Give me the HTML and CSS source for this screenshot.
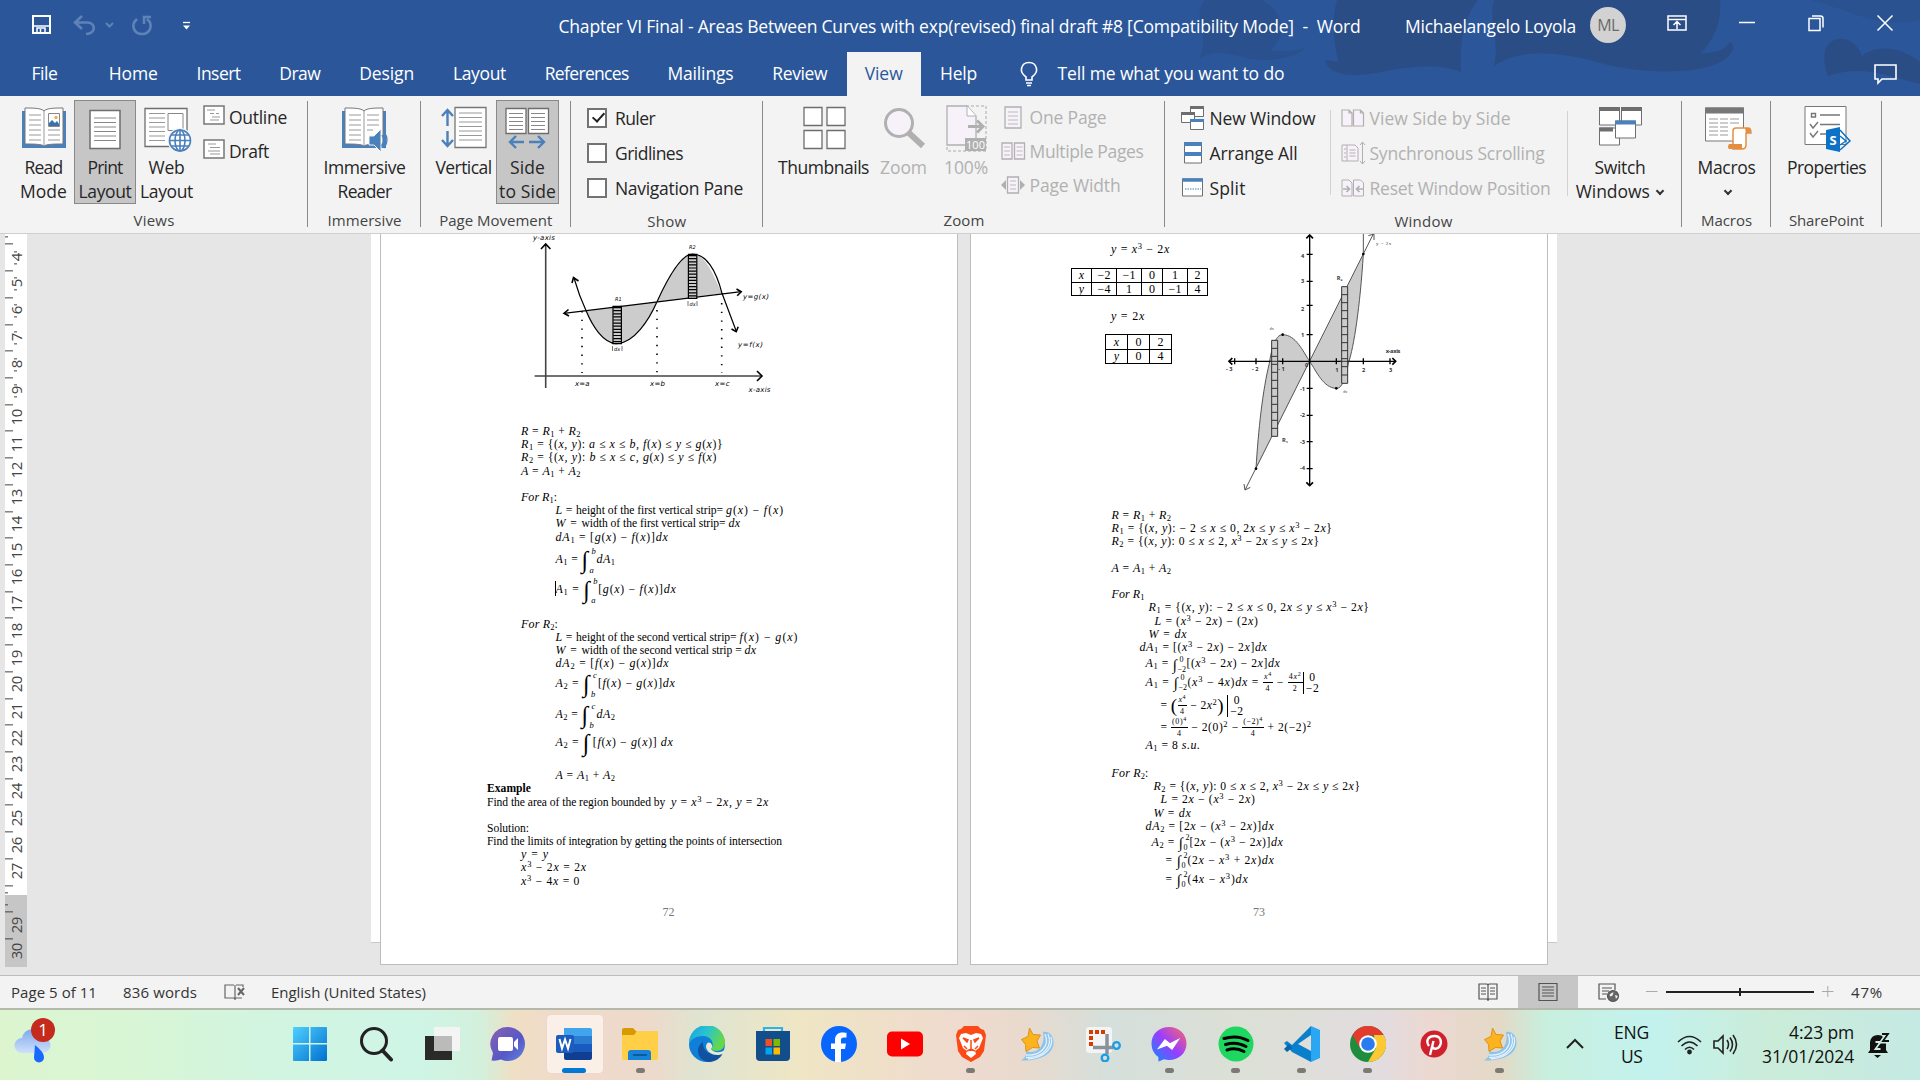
FILE: index.html
```html
<!DOCTYPE html>
<html lang="en">
<head>
<meta charset="utf-8">
<title>Chapter VI Final - Word</title>
<link rel="stylesheet" href="styles.css">
</head>
<body>
<div class="app">
<header class="titlebar">
  <svg class="clouds" width="760" height="96" viewBox="1160 0 760 96" fill="#2a4d85">
    <path d="M1205 0C1190 18 1212 30 1199 60C1212 48 1232 54 1250 59C1278 63 1300 55 1305 48C1290 52 1276 52 1270 50C1288 36 1284 12 1262 0z" opacity=".6"/>
    <path d="M1337 0C1330 25 1336 48 1338 62L1325 60C1330 80 1365 76 1390 70C1420 66 1440 64 1461 72C1460 45 1462 20 1478 0z"/>
    <path d="M1494 0C1488 22 1500 40 1494 66C1520 48 1555 52 1590 60C1640 76 1700 74 1720 62C1734 54 1736 46 1730 42C1722 54 1708 52 1700 54C1716 38 1722 18 1720 0z"/>
    <path d="M1828 76C1822 60 1822 42 1838 39C1852 37 1860 50 1862 56C1880 42 1906 50 1920 62V84C1890 76 1860 64 1828 76z"/>
    <path d="M1810 0C1850 10 1880 30 1920 20V0z" opacity=".45"/>
  </svg>
  <div class="caption">
    <div class="quick">
      <svg width="200" height="30" viewBox="0 10 200 30" fill="none" stroke="#fff">
        <path d="M33 16h17v17h-17z" stroke-width="2"/><path d="M33 26h17M37 34v-6h8v6M40.500 29v5" stroke-width="1.500"/>
        <g stroke="#5f82b8" stroke-width="2.600"><path d="M82 16l-7 6.500 7 6.500M76 22.500h12c8 1 8 11 -2 11.500"/><path d="M106 23l3.500 3.500 3.500-3.500" stroke-width="2"/><path d="M137 19c-7 6-3 15 5 15s12-9 5-15M144 24v-7h7"/></g>
        <path d="M183 22.500h7" stroke-width="1.300"/><path d="M183 25.500h7l-3.500 4z" fill="#fff" stroke="none"/>
      </svg>
    </div>
    <span class="doc-name" data-w="802">Chapter VI Final - Areas Between Curves with exp(revised) final draft #8 [Compatibility Mode]&nbsp; -&nbsp; Word</span>
    <span class="user" data-w="171">Michaelangelo Loyola</span>
    <span class="avatar">ML</span>
    <svg class="winbtns" width="260" height="32" viewBox="1650 8 260 32" fill="none" stroke="#fff" stroke-width="1.500">
      <path d="M1668 16h18v14h-18zM1668 19.500h18M1677 29v-7M1673.500 25l3.500-3.500 3.500 3.500"/>
      <path d="M1739 22.500h16"/><path d="M1809 18.500h11v12h-11zM1812 16h8.500q2.500 0 2.500 2.500v9"/>
      <path d="M1877.500 15.500l15 15M1892.500 15.500l-15 15"/>
    </svg>
  </div>
  <nav class="tabs">
    <a class="file"><span data-w="26">File</span></a><a><span data-w="49">Home</span></a><a><span data-w="44">Insert</span></a><a><span data-w="41">Draw</span></a><a><span data-w="55">Design</span></a><a><span data-w="53">Layout</span></a><a><span data-w="84">References</span></a><a><span data-w="66">Mailings</span></a><a><span data-w="55">Review</span></a><a class="on"><span data-w="38">View</span></a><a><span data-w="37">Help</span></a>
    <svg class="bulb" width="22" height="28" viewBox="0 0 22 28" fill="none" stroke="#fff" stroke-width="1.600"><path d="M8 20v-3C4 14 3 11 3.500 8.500c1.500-8 13.500-8 15 0C19 11 18 14 14 17v3zM8 23h6M9 25.500h4"/></svg>
    <span class="tell" data-w="227">Tell me what you want to do</span>
    <svg class="comment" width="24" height="24" viewBox="0 0 24 24" fill="none" stroke="#fff" stroke-width="1.600"><path d="M1 3h21v14H8l-4 4v-4H1z"/></svg>
  </nav>
</header>

<section class="ribbon">
  <div class="group views">
    <div class="tools">
      <div class="btn w61">
        <svg viewBox="0 0 48 46"><path d="M2 5h44v37H2z" fill="#4a80bb"/><path d="M5 2c8 0 16 0 19 3 3-3 11-3 19-3v36c-8 0-16 0-19 2-3-2-11-2-19-2z" fill="#fff" stroke="#777"/><path d="M24 5v35M9 9h12M9 14h12M9 19h12M9 24h12M9 29h12M9 34h12M28 24h12M28 29h12M28 34h12" stroke="#999"/><path d="M28.500 7.500h11v13h-11z" fill="#fff" stroke="#888"/><path d="M29 20v-3l3-3 3 3 2-2 2 3v2z" fill="#3a72ad"/><circle cx="36" cy="11.500" r="1.700" fill="#e8b060"/></svg>
        <span data-w="38">Read</span><span data-w="47">Mode</span></div>
      <div class="btn w62 on">
        <svg viewBox="0 0 48 46"><path d="M9 4.500h30v38H9z" fill="#fff" stroke="#6e6e6e" stroke-width="1.500"/><path d="M13 12h22M13 16.500h22M13 21h22M13 25.500h22M13 30h22M13 34.500h22" stroke="#888"/></svg>
        <span data-w="35">Print</span><span data-w="53">Layout</span></div>
      <div class="btn w61">
        <svg viewBox="0 0 48 46"><path d="M2 2.500h42v38H2z" fill="#fff" stroke="#6e6e6e" stroke-width="1.300"/><path d="M6 7.500h16M6 12h16M6 16.500h16M6 21h16M6 25.500h16M6 30h16M6 34.500h16" stroke="#999"/><path d="M25 7.500h15v17H25z" fill="#fff" stroke="#888"/><circle cx="37" cy="34.500" r="12.500" fill="#f3f3f3"/><g fill="#fff" stroke="#4a80bb" stroke-width="1.600"><circle cx="37" cy="34.500" r="10.500"/><ellipse cx="37" cy="34.500" rx="5" ry="10.500"/><path d="M37 24v21M27 34.500h20M29 29h16M29 40h16"/></g></svg>
        <span data-w="36">Web</span><span data-w="53">Layout</span></div>
      <div class="list">
        <div class="item"><svg viewBox="0 0 24 24"><path d="M2 3h20v18H2z" fill="#fff" stroke="#777" stroke-width="1.500"/><path d="M5 7h8M8 10.500h4M14 10.500h3M10 14h8M8 17h9" stroke="#999"/></svg><span data-w="58">Outline</span></div>
        <div class="item"><svg viewBox="0 0 24 24"><path d="M2 3h20v18H2z" fill="#fff" stroke="#777" stroke-width="1.500"/><path d="M6 7h8M8 10.500h10M6 14h12M8 17h10" stroke="#999"/></svg><span data-w="40">Draft</span></div>
      </div>
    </div>
    <div class="name"><span data-w="41">Views</span></div>
  </div>
  <div class="group immersive">
    <div class="tools center"><div class="btn">
      <svg viewBox="0 0 48 46"><path d="M1 5h44v37H1z" fill="#4a80bb"/><path d="M4 2c8 0 16 0 19 3 3-3 11-3 19-3v36c-8 0-16 0-19 2-3-2-11-2-19-2z" fill="#fff" stroke="#777"/><path d="M23 5v35M8 9h12M8 14h12M8 19h12M8 24h12M8 29h12M8 34h12M26 9h12M26 14h12M26 19h12M26 24h6" stroke="#999"/><path d="M28 30h5l7-7v23l-7-7h-5z" fill="#4a80bb" stroke="#f3f3f3"/><path d="M41 29q3 5 0 11M43 26q6 8 0 16" fill="none" stroke="#4a80bb" stroke-width="1.300"/></svg>
      <span data-w="82">Immersive</span><span data-w="54">Reader</span></div></div>
    <div class="name"><span data-w="74">Immersive</span></div>
  </div>
  <div class="group movement">
    <div class="tools">
      <div class="btn w65"><svg viewBox="0 0 48 46"><path d="M15 1.500h31v40H15z" fill="#fff" stroke="#777" stroke-width="1.300"/><path d="M19 7h23M19 11.500h23M19 16h23M19 20.500h23M19 25h23M19 29.500h23M19 34h23" stroke="#999"/><path d="M7.500 5v15M2 10l5.500-6 5.500 6M7.500 25v14M2 34l5.500 6 5.500-6" fill="none" stroke="#4a80bb" stroke-width="2.400"/></svg><span data-w="56">Vertical</span></div>
      <div class="btn w63 on"><svg viewBox="0 0 48 46"><path d="M2 2.500h20v25H2zM24.500 2.500h20v25h-20z" fill="#fff" stroke="#6e6e6e" stroke-width="1.300"/><path d="M5 7.500h14M5 11.500h14M5 15.500h14M5 19.500h14M5 23.500h14M27 7.500h14M27 11.500h14M27 15.500h14M27 19.500h14M27 23.500h14" stroke="#888"/><path d="M20 36H7M12 30l-6 6 6 6M25 36h15M34 30l6 6-6 6" fill="none" stroke="#4a80bb" stroke-width="2.400"/></svg><span data-w="35">Side</span><span data-w="57">to Side</span></div>
    </div>
    <div class="name"><span data-w="113">Page Movement</span></div>
  </div>
  <div class="group show">
    <div class="tools"><div class="list wide">
      <div class="item"><i class="box on"></i><span data-w="40">Ruler</span></div>
      <div class="item"><i class="box"></i><span data-w="68">Gridlines</span></div>
      <div class="item"><i class="box"></i><span data-w="128">Navigation Pane</span></div>
    </div></div>
    <div class="name"><span data-w="39">Show</span></div>
  </div>
  <div class="group zoom">
    <div class="tools">
      <div class="btn w93"><svg viewBox="0 0 48 46" fill="#fff" stroke="#6e6e6e" stroke-width="1.300"><path d="M4 1.500h18v18H4zM27 1.500h18v18H27zM4 24.500h18v18H4zM27 24.500h18v18H27z"/></svg><span data-w="91">Thumbnails</span></div>
      <div class="btn w67 off"><svg viewBox="0 0 48 46"><path d="M29 27l14 13" stroke="#b0b0b0" stroke-width="6"/><circle cx="19" cy="17" r="13.500" fill="#f7f2f9" stroke="#b0b0b0" stroke-width="3"/></svg><span data-w="47">Zoom</span></div>
      <div class="btn w58 off"><svg viewBox="0 0 48 46"><path d="M24 0h20v45H5v-6" fill="none" stroke="#aaa" stroke-dasharray="3 2"/><path d="M5 0h20l9 10v29H5z" fill="#f7f2f9" stroke="#b0b0b0" stroke-width="1.300"/><path d="M25 0v10h9" fill="#fff" stroke="#b0b0b0"/><path d="M26 20.500h14M35 14.500l6 6-6 6" stroke="#b0b0b0" stroke-width="3" fill="none"/><path d="M23 32h21v13H23z" fill="#b0b0b0"/><text x="33.500" y="42.500" class="hundred">100</text></svg><span data-w="44">100%</span></div>
      <div class="list off">
        <div class="item"><svg viewBox="0 0 24 24"><path d="M4 2h16v21H4z" fill="#f7f2f9" stroke="#b0b0b0" stroke-width="1.300"/><path d="M7 7h10M7 11h10M7 15h10M7 19h10" stroke="#bbb"/></svg><span data-w="77">One Page</span></div>
        <div class="item"><svg viewBox="0 0 24 24"><path d="M1 4h10v16H1zM13.500 4h10v16h-10z" fill="#f7f2f9" stroke="#b0b0b0" stroke-width="1.300"/><path d="M3 8h6M3 12h6M3 16h6M15.500 8h6M15.500 12h6M15.500 16h6" stroke="#bbb"/></svg><span data-w="114">Multiple Pages</span></div>
        <div class="item"><svg viewBox="0 0 24 24"><path d="M6.500 4h11v16h-11z" fill="#f7f2f9" stroke="#b0b0b0" stroke-width="1.300"/><path d="M9 8h6M9 12h6M9 16h6" stroke="#bbb"/><path d="M5 7v10l-5-5zM19 7v10l5-5z" fill="#b0b0b0"/></svg><span data-w="91">Page Width</span></div>
      </div>
    </div>
    <div class="name"><span data-w="41">Zoom</span></div>
  </div>
  <div class="group window">
    <div class="tools">
      <div class="list wide first">
        <div class="item"><svg viewBox="0 0 24 24" fill="#fff" stroke="#6e6e6e"><path d="M9.500 0.500h13v10h-13z"/><path d="M9 1.500h14" stroke-width="3"/><path d="M.5 6.500h13v10H.500z"/><path d="M0 7.500h14" stroke-width="3"/><path d="M9.500 13.500h13v10h-13z"/><path d="M9 14.500h14" stroke="#4a80bb" stroke-width="3"/></svg><span data-w="106">New Window</span></div>
        <div class="item"><svg viewBox="0 0 24 24" fill="#fff" stroke="#6e6e6e"><path d="M3.500 2h17v20h-17z"/><path d="M3 3h18M3 13h18" stroke="#4a80bb" stroke-width="4"/></svg><span data-w="88">Arrange All</span></div>
        <div class="item"><svg viewBox="0 0 24 24" fill="#fff" stroke="#6e6e6e"><path d="M1.500 3h20v17h-20z"/><path d="M1 4h21" stroke="#4a80bb" stroke-width="3.500"/><path d="M4 13h16" stroke="#4a80bb" stroke-dasharray="1.500 1"/></svg><span data-w="36">Split</span></div>
      </div>
      <div class="list wide off second">
        <div class="item"><svg viewBox="0 0 24 24" fill="#f7f2f9" stroke="#b0b0b0"><path d="M1 4h7l3 3v13H1zM12.500 4h7l3 3v13h-10zM8 4v3h3M19.500 4v3h3" stroke-width="1.200"/></svg><span data-w="141">View Side by Side</span></div>
        <div class="item"><svg viewBox="0 0 24 24" fill="#f7f2f9" stroke="#b0b0b0"><path d="M6 4H1v16h5M6 4h8l3 3v13H6zM3 8h2M3 12h2M3 16h2M8.500 9h6M8.500 12h6M8.500 15h6M21.500 1v22M19 4l2.500-3L24 4M19 20l2.500 3 2.500-3"/></svg><span data-w="175">Synchronous Scrolling</span></div>
        <div class="item"><svg viewBox="0 0 24 24" fill="#f7f2f9" stroke="#b0b0b0"><path d="M1 4h7l3 3v13H1zM12.500 4h7l3 3v13h-10z"/><path d="M2 13h6M22 13h-6M5.500 10l3 3-3 3M18.500 10l-3 3 3 3" stroke-width="1.700"/></svg><span data-w="181">Reset Window Position</span></div>
      </div>
      <div class="btn switch"><svg viewBox="0 0 48 46" fill="#fff" stroke="#6e6e6e"><path d="M3.500 2h20v17h-20zM25.500 2h20v17h-20zM3.500 22h20v17h-20z"/><path d="M3 3h21M25 3h21M3 23.500h14" stroke-width="4"/><path d="M19.500 15h20v17h-20z"/><path d="M19 16.500h21" stroke="#4a80bb" stroke-width="4"/></svg><span data-w="51">Switch</span><span><span data-w="74">Windows</span> <i class="chev"></i></span></div>
    </div>
    <div class="name"><span data-w="58">Window</span></div>
  </div>
  <div class="group macros">
    <div class="tools center"><div class="btn"><svg viewBox="0 0 48 46"><path d="M2.500 2h38v33h-38z" fill="#fff" stroke="#777"/><path d="M2 4.500h39" stroke="#777" stroke-width="6"/><path d="M6 13h9M17 13h8M27 13h9M6 17h9M17 17h8M27 17h9M6 21h9M17 21h8M6 25h9M17 25h8M6 29h9M17 29h8" stroke="#999"/><path d="M30 25q0-3 3-3h12q3 0 3 5h-5v12q0 4-4 4h-9z" fill="#fff" stroke="#e58e3f" stroke-width="1.500"/><path d="M26 38h13v5H26q-2-2 0-5zM42 22h5v5h-4z" fill="#e58e3f"/></svg><span data-w="58">Macros</span><span><i class="chev"></i></span></div></div>
    <div class="name"><span data-w="51">Macros</span></div>
  </div>
  <div class="group share">
    <div class="tools center"><div class="btn"><svg viewBox="0 0 48 46"><path d="M2 .5h41v38H2z" fill="#fff" stroke="#777"/><path d="M8.500 7.500h4v3.500h-4zM17 9h20M17 18.500h20M17 28h8M7 18l3 4 5-6M7 27l3 4 5-6" fill="none" stroke="#777" stroke-width="1.400"/><path d="M37 24l10 11-10 9M37 30l6 5-6 4" fill="none" stroke="#0d72c5" stroke-width="1.500"/><path d="M23 24l14-3v25l-14-3z" fill="#0d72c5"/><text x="30" y="39" class="sp">S</text></svg><span data-w="79">Properties</span></div></div>
    <div class="name"><span data-w="75">SharePoint</span></div>
  </div>
</section>

<main class="desk">
  <div class="ruler"><div class="ticks" id="ticks"></div></div>
  <div class="spread">
  <article class="page left">
    <svg class="plot" width="270" height="166" viewBox="520 234 270 166">
      <path d="M586.200 311C592 325 603 343.500 616.800 343.700C634 343 649 320 657 301.700C666 282 680 254 692.600 254C706 254 714 277 722 293.300z" fill="#ccc"/>
      <path d="M574 278C578 292 582 302 586.200 311C592 325 603 343.500 616.800 343.700C634 343 649 320 657 301.700C666 282 680 254 692.600 254C706 254 716 270 722 293.300L736.200 331M564 313.300L741.200 291.700" fill="none" stroke="#000" stroke-width="1.200"/>
      <path d="M545.700 388V245M534.600 376H762" fill="none" stroke="#444" stroke-width="1.600"/>
      <path d="M541 249l4.700-5 4.700 5M757 371l5 5-5 5M572 283l1.500-5.500 5 3.500M568.500 309.500l-4.500 3.800 5 2.700M736.500 289l4.700 2.700-4 4M731.500 329l4.700 2.700 2-5" fill="none" stroke="#000" stroke-width="1.600"/>
      <path d="M582 311v62M657 310v63M721.700 303v70" stroke="#000" stroke-width="1.600" stroke-dasharray="1.400 7.300"/>
      <path d="M617.200 306.500v37M692.600 254.500v44" stroke="#ccc" stroke-width="8"/><path d="M617.200 307v37M692.600 255v44" stroke="#000" stroke-width="8" stroke-dasharray="1.200 1.900"/><path d="M613 306.300h8.400v37.400H613zM688.400 254.300h8.400v44h-8.400z" fill="none" stroke="#000" stroke-width="1.200"/>
      <path d="M612.500 346v5M622 346v5M688 301v5M697 301v5" stroke="#555" stroke-width=".8"/>
      <g class="lbl"><text x="533" y="239.500" textLength="22">y-axis</text><text x="748.500" y="391.500" textLength="22">x-axis</text><text x="743" y="299" textLength="26">y=g(x)</text><text x="738" y="347" textLength="25">y=f(x)</text><text x="575" y="386" textLength="14.500">x=a</text><text x="650" y="386" textLength="15">x=b</text><text x="715" y="386" textLength="14.500">x=c</text></g>
      <g class="lbl tiny"><text x="615" y="301">R1</text><text x="689" y="248.500">R2</text><text x="614" y="350.500">dx</text><text x="689.500" y="305.500">dx</text></g>
    </svg>
    <div class="text">
      <p class="i1"><span data-w="60"><i>R</i> = <i>R</i><sub>1</sub> + <i>R</i><sub>2</sub></span></p>
      <p class="i1"><span data-w="202"><i>R</i><sub>1</sub> = {(<i>x, y</i>): <i>a</i> ≤ <i>x</i> ≤ <i>b, f</i>(<i>x</i>) ≤ <i>y</i> ≤ <i>g</i>(<i>x</i>)}</span></p>
      <p class="i1"><span data-w="196"><i>R</i><sub>2</sub> = {(<i>x, y</i>): <i>b</i> ≤ <i>x</i> ≤ <i>c, g</i>(<i>x</i>) ≤ <i>y</i> ≤ <i>f</i>(<i>x</i>)</span></p>
      <p class="i1"><span data-w="60"><i>A</i> = <i>A</i><sub>1</sub> + <i>A</i><sub>2</sub></span></p>
      <p></p>
      <p class="i1"><span data-w="36"><i>For R</i><sub>1</sub>:</span></p>
      <p class="i2"><span data-w="20.5"><i>L</i> = </span><span data-w="150">height of the first vertical strip= </span><span data-w="58"><i>g</i>(<i>x</i>) − <i>f</i>(<i>x</i>)</span></p>
      <p class="i2"><span data-w="26"><i>W</i> = </span><span data-w="147">width of the first vertical strip= </span><span data-w="12"><i>dx</i></span></p>
      <p class="i2"><span data-w="113"><i>dA</i><sub>1</sub> = [<i>g</i>(<i>x</i>) − <i>f</i>(<i>x</i>)]<i>dx</i></span></p>
      <p class="i2 h33"><span data-w="60"><i>A</i><sub>1</sub> = <span class="int"><b>∫</b><em>b</em><em>a</em></span><i>dA</i><sub>1</sub></span></p>
      <p class="i2 h28 caret"><span data-w="121"><i>A</i><sub>1</sub> = <span class="int"><b>∫</b><em>b</em><em>a</em></span>[<i>g</i>(<i>x</i>) − <i>f</i>(<i>x</i>)]<i>dx</i></span></p>
      <p></p>
      <p class="i1"><span data-w="37"><i>For R</i><sub>2</sub>:</span></p>
      <p class="i2"><span data-w="20.5"><i>L</i> = </span><span data-w="163.5">height of the second vertical strip= </span><span data-w="59"><i>f</i>(<i>x</i>) − <i>g</i>(<i>x</i>)</span></p>
      <p class="i2"><span data-w="26"><i>W</i> = </span><span data-w="163">width of the second vertical strip = </span><span data-w="12"><i>dx</i></span></p>
      <p class="i2"><span data-w="114"><i>dA</i><sub>2</sub> = [<i>f</i>(<i>x</i>) − <i>g</i>(<i>x</i>)]<i>dx</i></span></p>
      <p class="i2 h28"><span data-w="120"><i>A</i><sub>2</sub> = <span class="int"><b>∫</b><em>c</em><em>b</em></span>[<i>f</i>(<i>x</i>) − <i>g</i>(<i>x</i>)]<i>dx</i></span></p>
      <p class="i2 h33"><span data-w="60"><i>A</i><sub>2</sub> = <span class="int"><b>∫</b><em>c</em><em>b</em></span><i>dA</i><sub>2</sub></span></p>
      <p class="i2 h23"><span data-w="118"><i>A</i><sub>2</sub> = <span class="int bare"><b>∫</b></span>[<i>f</i>(<i>x</i>) − <i>g</i>(<i>x</i>)] <i>dx</i></span></p>
      <p class="h15"></p>
      <p class="i2"><span data-w="60"><i>A</i> = <i>A</i><sub>1</sub> + <i>A</i><sub>2</sub></span></p>
      <p><strong data-w="44">Example</strong></p>
      <p><span data-w="184">Find the area of the region bounded by  </span><span data-w="98"><i>y</i> = <i>x</i><sup>3</sup> − 2<i>x, y</i> = 2<i>x</i></span></p>
      <p></p>
      <p><span data-w="42">Solution:</span></p>
      <p><span data-w="295">Find the limits of integration by getting the points of intersection</span></p>
      <p class="i1"><span data-w="28"><i>y</i> = <i>y</i></span></p>
      <p class="i1"><span data-w="66"><i>x</i><sup>3</sup> − 2<i>x</i> = 2<i>x</i></span></p>
      <p class="i1"><span data-w="59"><i>x</i><sup>3</sup> − 4<i>x</i> = 0</span></p>
    </div>
    <div class="folio">72</div>
  </article>
  <article class="page right">
    <div class="upper">
      <div class="tables">
        <p class="i3"><span data-w="59"><i>y</i> = <i>x</i><sup>3</sup> − 2<i>x</i></span></p>
        <table class="t1"><tr><td><i>x</i></td><td class="m">−2</td><td class="m">−1</td><td class="z">0</td><td class="m">1</td><td>2</td></tr><tr><td><i>y</i></td><td>−4</td><td>1</td><td>0</td><td>−1</td><td>4</td></tr></table>
        <p class="i3"><span data-w="34"><i>y</i> = 2<i>x</i></span></p>
        <table class="t2"><tr><td><i>x</i></td><td>0</td><td>2</td></tr><tr><td><i>y</i></td><td>0</td><td>4</td></tr></table>
      </div>
      <svg class="plot2" width="187" height="262" viewBox="540 12 561 786">
        <path d="M809 394L970 72C960 230 942 350 925 400C915 450 905 476 889 475C850 474 830 425 809 394C788 363 768 315 728 314C705 314 694 360 688 400C668 480 655 600 648 716z" fill="#ccc"/>
        <g fill="none" stroke="#555" stroke-width="3"><path d="M615 780L1000 12M970 12V72C960 230 942 350 925 400C915 450 905 476 889 475C850 474 830 425 809 394C788 363 768 315 728 314C705 314 694 360 688 400C668 480 655 600 648 716M612 762l3 18 16-8M985 17l17-5v18"/></g>
        <path d="M566 394h502M809 15v752M584 385v18M648 385v18M728 385v18M889 385v18M970 385v18M1050 385v18M800 73h18M800 154h18M800 226h18M800 314h18M800 475h18M800 556h18M800 635h18M800 716h18" stroke="#000" stroke-width="4" fill="none"/>
        <path d="M577 384l-10 10 10 10M1057 384l10 10-10 10M799 25l10-10 10 10M799 757l10 10 10-10" fill="none" stroke="#000" stroke-width="5"/>
        <path d="M695 331h18v288h-18zM905 170h18v290h-18z" fill="#ccc"/>
        <path d="M695 331h18v288h-18zM695 355h18M695 379h18M695 403h18M695 427h18M695 451h18M695 475h18M695 499h18M695 523h18M695 547h18M695 571h18M695 595h18M905 170h18v290h-18zM905 194h18M905 218h18M905 242h18M905 266h18M905 290h18M905 314h18M905 338h18M905 362h18M905 386h18M905 410h18M905 435h18M690 394h30M900 394h30" fill="none" stroke="#333" stroke-width="3"/>
        <g fill="#000"><circle cx="728" cy="314" r="4"/><circle cx="889" cy="475" r="4"/><circle cx="648" cy="716" r="4"/><circle cx="970" cy="72" r="4"/></g>
        <g class="num"><text x="783" y="83">4</text><text x="783" y="160">3</text><text x="783" y="242">2</text><text x="783" y="320">1</text><text x="780" y="482">-1</text><text x="780" y="562">-2</text><text x="780" y="641">-3</text><text x="780" y="720">-4</text><text x="558" y="423">- 3</text><text x="636" y="423">- 2</text><text x="715" y="423">- 1</text><text x="795" y="411">0</text><text x="886" y="427">1</text><text x="966" y="427">2</text><text x="1047" y="427">3</text><text x="1037" y="369" textLength="44">x-axis</text><text x="726" y="637">R₁</text><text x="890" y="151">R₂</text></g>
        <g class="num thin"><text x="1008" y="45" textLength="46">y = 2x</text><text x="689" y="300" font-size="12">dx</text><text x="910" y="488" font-size="12">dx</text></g>
      </svg>
    </div>
    <div class="text">
      <p><span data-w="60"><i>R</i> = <i>R</i><sub>1</sub> + <i>R</i><sub>2</sub></span></p>
      <p><span data-w="221"><i>R</i><sub>1</sub> = {(<i>x, y</i>): − 2 ≤ <i>x</i> ≤ 0, 2<i>x</i> ≤ <i>y</i> ≤ <i>x</i><sup>3</sup> − 2<i>x</i>}</span></p>
      <p><span data-w="208"><i>R</i><sub>2</sub> = {(<i>x, y</i>): 0 ≤ <i>x</i> ≤ 2, <i>x</i><sup>3</sup> − 2<i>x</i> ≤ <i>y</i> ≤ 2<i>x</i>}</span></p>
      <p></p>
      <p><span data-w="60"><i>A</i> = <i>A</i><sub>1</sub> + <i>A</i><sub>2</sub></span></p>
      <p></p>
      <p><span data-w="33"><i>For R</i><sub>1</sub></span></p>
      <p class="a37"><span data-w="221"><i>R</i><sub>1</sub> = {(<i>x, y</i>): − 2 ≤ <i>x</i> ≤ 0, 2<i>x</i> ≤ <i>y</i> ≤ <i>x</i><sup>3</sup> − 2<i>x</i>}</span></p>
      <p class="a43"><span data-w="104"><i>L</i> = (<i>x</i><sup>3</sup> − 2<i>x</i>) − (2<i>x</i>)</span></p>
      <p class="a37"><span data-w="39"><i>W</i> = <i>dx</i></span></p>
      <p class="a28"><span data-w="128"><i>dA</i><sub>1</sub> = [(<i>x</i><sup>3</sup> − 2<i>x</i>) − 2<i>x</i>]<i>dx</i></span></p>
      <p class="a34 h20"><span data-w="135"><i>A</i><sub>1</sub> = <span class="int sm"><b>∫</b><em>0</em><em>−2</em></span>[(<i>x</i><sup>3</sup> − 2<i>x</i>) − 2<i>x</i>]<i>dx</i></span></p>
      <p class="a34 h20"><span data-w="174"><i>A</i><sub>1</sub> = <span class="int sm"><b>∫</b><em>0</em><em>−2</em></span>(<i>x</i><sup>3</sup> − 4<i>x</i>)<i>dx</i> = <span class="fr"><u><i>x</i><sup>4</sup></u><u>4</u></span> − <span class="fr"><u>4<i>x</i><sup>2</sup></u><u>2</u></span><span class="ev"><u>0</u><u>−2</u></span></span></p>
      <p class="a49 h26"><span data-w="83">= <span class="big">(</span><span class="fr"><u><i>x</i><sup>4</sup></u><u>4</u></span> − 2<i>x</i><sup>2</sup><span class="big">)</span> <span class="ev"><u>0</u><u>−2</u></span></span></p>
      <p class="a49 h18"><span data-w="151">= <span class="fr"><u>(0)<sup>4</sup></u><u>4</u></span> − 2(0)<sup>2</sup> − <span class="fr"><u>(−2)<sup>4</sup></u><u>4</u></span> + 2(−2)<sup>2</sup></span></p>
      <p class="a34 h17"><span data-w="55"><i>A</i><sub>1</sub> = 8 <i>s.u.</i></span></p>
      <p></p>
      <p><span data-w="37"><i>For R</i><sub>2</sub>:</span></p>
      <p class="a42"><span data-w="207"><i>R</i><sub>2</sub> = {(<i>x, y</i>): 0 ≤ <i>x</i> ≤ 2, <i>x</i><sup>3</sup> − 2<i>x</i> ≤ <i>y</i> ≤ 2<i>x</i>}</span></p>
      <p class="a49"><span data-w="95"><i>L</i> = 2<i>x</i> − (<i>x</i><sup>3</sup> − 2<i>x</i>)</span></p>
      <p class="a42"><span data-w="38"><i>W</i> = <i>dx</i></span></p>
      <p class="a34"><span data-w="129"><i>dA</i><sub>2</sub> = [2<i>x</i> − (<i>x</i><sup>3</sup> − 2<i>x</i>)]<i>dx</i></span></p>
      <p class="a40 h18"><span data-w="132"><i>A</i><sub>2</sub> = <span class="int sm s1"><b>∫</b><em>2</em><em>0</em></span>[2<i>x</i> − (<i>x</i><sup>3</sup> − 2<i>x</i>)]<i>dx</i></span></p>
      <p class="a54 h18"><span data-w="109">= <span class="int sm s1"><b>∫</b><em>2</em><em>0</em></span>(2<i>x</i> − <i>x</i><sup>3</sup> + 2<i>x</i>)<i>dx</i></span></p>
      <p class="a54 h18"><span data-w="83">= <span class="int sm s1"><b>∫</b><em>2</em><em>0</em></span>(4<i>x</i> − <i>x</i><sup>3</sup>)<i>dx</i></span></p>
    </div>
    <div class="folio">73</div>
  </article>
  </div>
</main>

<footer class="status">
  <span data-w="86">Page 5 of 11</span><span data-w="74">836 words</span>
  <svg width="22" height="20" viewBox="0 0 22 20" fill="none" stroke="#666" stroke-width="1.200"><path d="M10 3H1v13h9l1 1 1-1h6M11 3v15M12 3h7v2"/><path d="M14 6l6 7M20 6l-6 7" stroke-width="2"/></svg>
  <span data-w="155">English (United States)</span>
  <div class="modes">
    <svg viewBox="0 0 60 32" fill="none" stroke="#555" stroke-width="1.200"><path d="M21 8h8l1 1 1-1h8v15h-8l-1 1-1-1h-8zM30 8v17M23 12h5M23 15h5M23 18h5M32 12h5M32 15h5M32 18h5"/></svg>
    <svg class="on" viewBox="0 0 60 32" fill="none" stroke="#555" stroke-width="1.200"><path d="M21 7.500h18v17H21zM24 11h12M24 14h12M24 17h12M24 20h12"/></svg>
    <svg viewBox="0 0 60 32" fill="none" stroke="#555" stroke-width="1.200"><path d="M28 23h-7V8h16v6M24 12h10M24 15h7M24 18h5"/><circle cx="35" cy="20" r="5.500" fill="#666"/><path d="M31.500 19q2-3 4-2.500l-1 3-2 1zM37 19l3 1-2 3z" fill="#f3f3f3" stroke="none"/></svg>
  </div>
  <svg class="slider" width="190" height="20" viewBox="1645 982 190 20" fill="none"><path d="M1646 991.500h11.500M1822 991.500h11.500M1827.800 986v11" stroke="#aaa"/><path d="M1666 992h148M1740 988v8" stroke="#222" stroke-width="2"/></svg>
  <span class="pct" data-w="32">47%</span>
</footer>

<footer class="taskbar">
  <div class="weather"><svg width="40" height="44" viewBox="0 0 40 44"><defs><linearGradient id="wc" x2="0" y2="1"><stop stop-color="#7fa8ec"/><stop offset="1" stop-color="#cfe0fb"/></linearGradient></defs><path d="M8 32a7.500 7.500 0 0 1 0-15C10 6 25 5 28 16a8 8 0 0 1 1 16z" fill="url(#wc)"/><path d="M21 24q9 7 9 12.500a5 5 0 0 1-10 0z" fill="#1769ff"/></svg><b>1</b></div>
  <div class="apps">
    <div><svg viewBox="0 0 36 36"><defs><linearGradient id="wn" x2="1" y2="1"><stop stop-color="#4fd0ff"/><stop offset="1" stop-color="#0070d0"/></linearGradient></defs><path d="M1 2a1 1 0 0 1 1-1h15v16H1zM18.500 1H34a1 1 0 0 1 1 1v15H18.500zM1 18.500h16V35H2a1 1 0 0 1-1-1zM18.500 18.500H35V34a1 1 0 0 1-1 1H18.500z" fill="url(#wn)"/></svg></div>
    <div><svg viewBox="0 0 36 36" fill="none" stroke="#222" stroke-width="3"><circle cx="16" cy="15" r="12.500"/><path d="M24.500 24.500l8.500 9" stroke-width="4" stroke-linecap="round"/></svg></div>
    <div><svg viewBox="0 0 36 36"><path d="M1 10h27v24H1z" fill="#2a2a28"/><path d="M10 1h26v24H10z" fill="#f4f4f4"/><path d="M10 10h18v15H10z" fill="#bbb"/></svg></div>
    <div><svg viewBox="0 0 36 36"><defs><linearGradient id="ch" x2="1" y2="1"><stop stop-color="#8a60b0"/><stop offset=".6" stop-color="#5558c8"/><stop offset="1" stop-color="#6088dd"/></linearGradient></defs><path d="M18 1a17 17 0 1 1-7 32.500Q7 35 1.500 34.500L3 27A17 17 0 0 1 18 1z" fill="url(#ch)"/><path d="M8 13q0-2 2-2h11q2 0 2 2v10q0 2-2 2H10q-2 0-2-2zM24 16l4-4v12l-4-4z" fill="#fff"/></svg></div>
    <div class="cur"><svg viewBox="0 0 36 36"><path d="M8 2h26a2 2 0 0 1 2 2v6H8z" fill="#41a5ee"/><path d="M8 10h28v8H8z" fill="#2b7cd3"/><path d="M8 18h28v8H8z" fill="#185abd"/><path d="M8 26h28v6a2 2 0 0 1-2 2H10a2 2 0 0 1-2-2z" fill="#103f91"/><rect y="9" width="18" height="18" rx="2" fill="#1b5cbe"/><path d="M3.500 13l2.500 9.500 3-9 3 9 2.500-9.500" fill="none" stroke="#fff" stroke-width="2"/></svg></div>
    <div class="run"><svg viewBox="0 0 36 36"><path d="M0 4q0-2 2-2h9l4 4-4 5H0z" fill="#d99a00"/><path d="M0 9h12l3-4h20q1 0 1 1v26q0 2-2 2H2q-2 0-2-2z" fill="#ffcf48"/><path d="M6 34V27q0-3 3-3h17q3 0 3 3v7z" fill="#1683d8"/><path d="M11 29h14" stroke="#0a5aa0" stroke-width="2"/></svg></div>
    <div><svg viewBox="0 0 36 36"><defs><linearGradient id="eg" x2="1" y2=".4"><stop stop-color="#1b9fe0"/><stop offset=".5" stop-color="#28c3d2"/><stop offset="1" stop-color="#65d84a"/></linearGradient></defs><circle cx="18" cy="18" r="18" fill="#0f7fd8"/><path d="M0 18A18 18 0 0 1 36 16c0 9-9 11-14 7 4-4 1-13-8-13C7 10 2 13 0 18z" fill="url(#eg)"/><path d="M34 27C24 32 13 26 14 16c-9 6-5 19 6 20 6 0 12-4 14-9z" fill="#10529f"/><path d="M22 23c2 3 8 5 14 1l-1.500 3.500C28 31 18 28 17 21c0-5 4-6 6-2q1 2-1 4z" fill="#e9ead2"/></svg></div>
    <div><svg viewBox="0 0 36 36"><path d="M9 6V2h18v4" fill="none" stroke="#2ab4e8" stroke-width="2.200"/><path d="M1 5h34v26q0 4-4 4H5q-4 0-4-4z" fill="#124e8c"/><path d="M10.500 13H17v7h-6.500z" fill="#f25022"/><path d="M18.500 13H25v7h-6.500z" fill="#7fba00"/><path d="M10.500 21.500H17v7h-6.500z" fill="#00a4ef"/><path d="M18.500 21.500H25v7h-6.500z" fill="#ffb900"/></svg></div>
    <div><svg viewBox="0 0 36 36"><circle cx="18" cy="18" r="18" fill="#0866ff"/><path d="M14 36V23h-4v-5.500h4V14c0-5 3-7.500 7.500-7.500 2 0 4 .3 4 .3v4.700h-2.500c-2.500 0-3 1.300-3 3v3h5l-1 5.500h-4v13z" fill="#fff"/></svg></div>
    <div><svg viewBox="0 0 36 36"><rect y="5.500" width="36" height="25" rx="5" fill="#f00"/><path d="M14 12.500l9 5.500-9 5.500z" fill="#fff"/></svg></div>
    <div class="run"><svg viewBox="0 0 36 36"><path d="M11 0h14l3 3 3 1 2 5-2 16-4 6-9 5-9-5-4-6L3 9l2-5 3-1z" fill="#fb4a16"/><path d="M8 8l5-1 5 2 5-2 5 1 2 4-4 10-4 3 1 3-5 4-5-4 1-3-4-3L6 12z" fill="#fff"/><path d="M10 12l5 2-1 2zM26 12l-5 2 1 2zM18 14v9M14 25l4-2 4 2M11 20l3 3M25 20l-3 3" stroke="#fb4a16" stroke-width="1.500" fill="#fb4a16"/></svg></div>
    <div><svg viewBox="0 0 36 36"><use href="#star"/></svg></div>
    <div><svg viewBox="0 0 36 36"><rect x="1" y="1" width="26" height="26" rx="3" fill="#f3f4f6"/><path d="M4 4h4v4H4zM10 4h4v4h-4zM16 4h4v4h-4zM4 10h4v4H4zM4 16h4v4H4z" fill="#d83b01"/><path d="M22 8v20M8 21.500h20" stroke="#8b9198" stroke-width="3.500"/><circle cx="31.500" cy="19.500" r="3.300" fill="none" stroke="#1c9be6" stroke-width="2.300"/><circle cx="20" cy="32" r="3.300" fill="none" stroke="#1c9be6" stroke-width="2.300"/></svg></div>
    <div class="run"><svg viewBox="0 0 36 36"><defs><linearGradient id="ms" x1="0" y1="1" x2="1" y2="0"><stop stop-color="#0a8cff"/><stop offset=".5" stop-color="#9a3dff"/><stop offset="1" stop-color="#ff6968"/></linearGradient></defs><path d="M18 1c10 0 17.500 7 17.500 16.500S28 34 18 34q-3 0-5-.7L7.500 35.500 7.300 31C3 28 .5 23 .5 17.500.500 8 8 1 18 1z" fill="url(#ms)"/><path d="M8 22l6-8 5 4 8-4-6 9-5-4z" fill="#fff" stroke="#fff" stroke-width="1.500"/></svg></div>
    <div class="run"><svg viewBox="0 0 36 36"><circle cx="18" cy="18" r="17.500" fill="#1ed760"/><path d="M6 12.500q13-4 24 2M7.500 18.500q11-3.500 20.500 2M9 24q9-3 17 1.500" fill="none" stroke="#000" stroke-width="3" stroke-linecap="round"/></svg></div>
    <div class="run"><svg viewBox="0 0 36 36"><path d="M27 0L8 19l-5-4-3 2 8 9L27 36V25L14 18l13-9z" fill="#0a7fcb"/><path d="M0 23l3 3 5-4-3-4z" fill="#0467ab"/><path d="M27 0l9 4v28l-9 4z" fill="#2aa6f2"/></svg></div>
    <div class="run"><svg viewBox="0 0 36 36"><circle cx="18" cy="18" r="18" fill="#1e8e3e"/><path d="M2.400 9A18 18 0 0 1 33.600 9L18 9.500 10 22z" fill="#e33b2e"/><path d="M33.600 9A18 18 0 0 1 18 36l8-14-2-13z" fill="#fcc934"/><circle cx="18" cy="18" r="8.800" fill="#fff"/><circle cx="18" cy="18" r="6.800" fill="#2a7bf0"/></svg></div>
    <div><svg viewBox="0 0 36 36"><circle cx="18" cy="18" r="13.500" fill="#d0202c"/><path d="M14 29l3.500-14M13 20c-4-6 0-10 5.500-10 6 0 8 6 5 10.500-2 3-6 3-7 .5" fill="none" stroke="#fff" stroke-width="2.400"/></svg></div>
    <div class="run"><svg viewBox="0 0 36 36"><g id="star"><path d="M24 6C30 5 35 10 34.500 17C34 28 22 35 2 34.500C6 32 8 29 7 25C18 29 27 20 24 6z" fill="#8cc3ea"/><path d="M26 8c5 11-3 22-19 21M29 8c5 12-4 24-22 23.500M32 11c3 10-6 21-23 22" fill="none" stroke="#e6f2fb" stroke-width="1.300"/><path d="M10.500 2l3.500 6.500 7.500.5-3.500 6 2.500 7-7-.5-6.500 4-.5-7-4-5 6.500-3z" fill="#fbb41e" stroke="#e0901f"/></g></svg></div>
  </div>
  <div class="tray">
    <svg class="up" width="18" height="12" viewBox="0 0 18 12" fill="none" stroke="#222" stroke-width="2"><path d="M1 10l8-8 8 8"/></svg>
    <div class="lang"><span data-w="35">ENG</span><span data-w="21">US</span></div>
    <svg class="net" width="62" height="24" viewBox="1677 1032 62 24" fill="none" stroke="#222" stroke-width="1.600"><path d="M1678 1041q11.500-11 23 0M1681.500 1045q8-8 16 0M1685 1048.500q4.500-4.500 9 0"/><circle cx="1689.500" cy="1051" r="1.600" fill="#222"/><path d="M1714 1040h4l5-5v17l-5-5h-4zM1727 1039q3 4.500 0 9M1730 1036.500q5 7 0 14M1733 1034q7 9.500 0 19"/></svg>
    <div class="clock"><span data-w="65">4:23 pm</span><span data-w="92">31/01/2024</span></div>
    <svg class="bell" width="24" height="26" viewBox="0 0 24 26"><path d="M3 18V10q1-7 8-7t8 7v8l2 3H1z" fill="#111"/><path d="M7 23h7l-3.500 3z" fill="#111"/><path d="M8.500 10h5l-5 7h5" stroke="#d0eee4" stroke-width="1.800" fill="none"/><path d="M15 2h6l-5 7h6" stroke="#cdebe0" stroke-width="5" fill="none"/><path d="M15 2h6l-5 7h6" stroke="#111" stroke-width="1.800" fill="none"/></svg>
  </div>
</footer>
</div>
<script src="script.js"></script>
</body>
</html>
```
FILE: styles.css
```css
* { box-sizing: border-box; }
body { margin: 0; width: 1920px; height: 1080px; overflow: hidden; font: 17.5px/24px "Open Sans", "Noto Sans", sans-serif; color: #262626; }
.app { display: flex; flex-direction: column; height: 1080px; }
[data-w] { display: inline-block; white-space: nowrap; }
svg { display: block; flex: none; }

/* title bar */
.titlebar { position: relative; height: 96px; flex: none; background: #2b579a; color: #fff; }
.clouds { position: absolute; right: 0; top: 0; }
.caption, .tabs { position: relative; display: flex; align-items: center; }
.caption { height: 52px; }
.quick { width: 558.500px; }
.quick svg { margin-bottom: 2px; }
.doc-name { width: 846.500px; }
.user { width: 185px; }
.avatar { width: 36px; height: 36px; margin-top: -2px; border-radius: 50%; background: #d2d2d2; color: #6b6b6b; font-size: 16px; line-height: 36px; text-align: center; letter-spacing: -.5px; }
.winbtns { margin-left: 24px; margin-top: -4px; }
.tabs { height: 44px; padding-left: 12px; }
.tabs a { height: 44px; padding: 0 19.400px; line-height: 43px; }
.tabs a.file { padding-right: 32px; }
.tabs a.on { padding: 0 18px; background: #f3f3f3; color: #2b579a; }
.bulb { margin-left: 22px; }
.tell { margin-left: 17px; margin-top: -2px; }
.comment { margin-left: auto; margin-right: 22px; }

/* ribbon */
.ribbon { display: flex; flex: none; height: 138px; padding-top: 4px; background: #f3f3f3; border-bottom: 1px solid #cfcfcf; }
.group { position: relative; display: flex; flex-direction: column; flex: none; }
.group::after { content: ""; position: absolute; right: 0; top: 1px; width: 1px; height: 126px; background: #8a8a8a; }
.tools { display: flex; height: 105px; }
.tools.center { justify-content: center; }
.name { margin-top: 4px; height: 25px; line-height: 25px; text-align: center; font-size: 15px; color: #444; }
.views { width: 308px; padding-left: 13px; }
.views .name { margin-left: -13px; }
.immersive { width: 113px; }
.movement { width: 149.500px; }
.movement .tools { padding-left: 10px; }
.show { width: 192.500px; }
.show .tools { padding-left: 16px; }
.zoom { width: 402px; }
.zoom .tools { padding-left: 14px; }
.window { width: 517px; }
.window .tools { padding-left: 16px; }
.macros { width: 89px; }
.share { width: 111px; }
.btn { display: flex; flex-direction: column; align-items: center; flex: none; border: 1px solid transparent; padding-top: 5px; }
.btn svg { width: 48px; height: 46px; margin-bottom: 3px; overflow: visible; }
.btn.on { background: #c6c6c6; border-color: #8a8a8a; }
.w58 { width: 58px; } .w61 { width: 61px; } .w62 { width: 62px; } .w63 { width: 63px; } .w65 { width: 65px; } .w67 { width: 67px; } .w93 { width: 93px; }
.off { color: #b1b1b1; }
.hundred { font: 11px "Open Sans", sans-serif; fill: #fff; text-anchor: middle; }
.sp { font: bold 13px "Open Sans", sans-serif; fill: #fff; text-anchor: middle; }
.list { padding: 0 0 0 6px; }
.item { display: flex; align-items: center; height: 34px; gap: 4.500px; }
.item svg { width: 24px; height: 24px; overflow: visible; }
.list.wide { padding: 0; }
.list.wide .item { height: 35px; }
.views .list { padding-left: 5px; }
.views .item { gap: 3px; }
.views .item svg { margin-top: -4px; }
.show .item { gap: 8.500px; }
.first { width: 149px; }
.second { width: 236px; }
.second, .switch { position: relative; }
.list.second { padding-left: 11px; }
.second::before, .switch::before { content: ""; position: absolute; left: 0; top: 10px; width: 1px; height: 85px; background: #d2d2d2; }
.switch { width: 108px; }
.box { width: 20px; height: 20px; border: 2px solid #737373; background: #fff; }
.box.on::after { content: ""; display: block; width: 5px; height: 10px; margin: 0 0 0 6px; border: solid #222; border-width: 0 2px 2px 0; transform: rotate(42deg); }
.chev { display: inline-block; width: 6px; height: 6px; margin: 0 1px 4px 3px; border: solid #333; border-width: 0 2px 2px 0; transform: rotate(45deg); }

/* workspace */
.desk { position: relative; display: flex; height: 742px; flex: none; overflow: hidden; background: #e6e6e6; border-bottom: 1px solid #bdbdbd; }
.ruler { width: 22px; height: 733px; margin-left: 5px; overflow: hidden; background: linear-gradient(#fff 661px, #c6c6c6 661px); }
.ticks { margin-top: -10px; }
.tick { display: flex; align-items: center; justify-content: center; height: 13.370px; writing-mode: vertical-rl; transform: rotate(180deg); font-size: 15px; line-height: 22px; letter-spacing: -.5px; color: #444; white-space: nowrap; }
.tick.bar::before { content: ""; width: 8px; height: 1.500px; background: #444; }
.tick.dots { justify-content: space-between; }
.tick.dots::before, .tick.dots::after { content: ""; width: 3px; height: 1px; background: #444; }
.spread { display: flex; gap: 12px; width: 1186px; height: 709px; margin-left: 344px; background: #fff; border-bottom: 1px solid #c8c8c8; padding-left: 9px; }
.page { position: relative; display: flex; flex-direction: column; width: 578px; height: 731px; flex: none; background: #fff; border: 1px solid #bdbdbd; border-top: 0; font: 11.600px/13.200px "Liberation Serif", serif; color: #000; }
.page.left { box-shadow: 12px 0 #e6e6e6; }
.page p { display: flex; align-items: center; height: 13.200px; margin: 0; white-space: pre; }
.page p [data-w] { white-space: pre; }
.page i { font-size: 12px; line-height: 0; }
.text sub, .text sup, .tables sup { font-size: 8.500px; line-height: 0; }
.text sub { vertical-align: -2px; }
.text sup, .tables sup { vertical-align: 4px; }
.plot { margin-left: 139px; }
.left .text { margin-top: 25px; padding-left: 106px; height: 474.500px; }
.page .i1 { padding-left: 34px; } .page .i2 { padding-left: 68.500px; }
.page .h33 { height: 33px; } .page .h28 { height: 28px; } .page .h23 { height: 23px; } .page .h15 { height: 14.500px; } .page .h20 { height: 19.600px; } .page .h26 { height: 25.500px; } .page .h18 { height: 18.500px; } .page .h17 { height: 16.500px; }
.caret { position: relative; }
.caret::before { content: ""; position: absolute; left: 68px; top: 4px; width: 1px; height: 15px; background: #000; }
.int { display: inline-grid; grid-template: 12px 15px / 8px 7px; vertical-align: middle; letter-spacing: 0; align-items: center; margin-top: -6px; margin-bottom: -6px; }
.int b { grid-row: 1 / 3; font-weight: 400; font-size: 24px; line-height: 27px; }
.int em { font-size: 8.500px; line-height: 8px; align-self: start; padding-left: 2px; }
.int em + em { grid-column: 2; align-self: end; padding-left: 0; }
.int.bare { grid-template-columns: 10px; }
.int.sm { grid-template: 9px 9px / 5px 9px; }
.int.s1 { grid-template-columns: 5px 6px; }
.int.sm b { font-size: 15px; line-height: 18px; }
.int.sm em { font-style: normal; font-size: 8px; }
.fr { display: inline-flex; flex-direction: column; align-items: center; vertical-align: middle; font-size: 8px; line-height: 8px; margin: -3px 0; }
.page .fr i { font-size: 8px; }
.fr u, .ev u { text-decoration: none; }
.fr u:first-child { border-bottom: 1px solid #000; padding: 0 1px 1px; }
.fr u + u { padding-top: 2px; }
.fr sup { font-size: 6px; vertical-align: 3px; }
.ev { display: inline-flex; flex-direction: column; align-items: center; vertical-align: middle; border-left: 1px solid #000; padding-left: 2px; line-height: 11px; margin: -3px 0; }
.big { font-size: 19px; line-height: 0; vertical-align: -3px; }
.lbl { font: italic 7px "DejaVu Sans", sans-serif; }
.lbl.tiny { font-size: 5px; }
.folio { height: 14px; margin-top: 6px; text-align: center; color: #777; font-size: 12px; }
.left .folio { padding-right: 1px; }
.upper { display: flex; height: 262px; }
.tables { width: 249px; padding: 9px 0 0 100px; }
.tables p.i3 { padding-left: 40px; height: 14px; font-size: 12px; }
.tables table { border-collapse: collapse; font-size: 12px; line-height: 12px; text-align: center; }
.tables td { border: 1.300px solid #000; padding: 0; width: 20px; height: 13.700px; }
.tables td.m { width: 25px; } .tables td.z { width: 21px; }
.t1 { margin: 11px 0 13px; }
.t2 { margin: 11px 0 0 34px; }
.tables .t2 td { width: 22px; height: 14.200px; }
.num { font: bold 17px "Open Sans", sans-serif; fill: #333; }
.num.thin { font: 15px "Liberation Serif", serif; }
.right .text { margin-top: 13px; padding-left: 140.500px; height: 390.500px; }
.a28 { padding-left: 28px; } .a34 { padding-left: 34px; } .a37 { padding-left: 37px; } .a40 { padding-left: 40px; } .a42 { padding-left: 42px; } .a43 { padding-left: 43px; } .a49 { padding-left: 49px; } .a54 { padding-left: 54px; }

/* status bar */
.status { display: flex; align-items: center; height: 32px; flex: none; padding-left: 11px; background: #f3f3f3; font-size: 15px; color: #333; }
.status > span { margin-right: 26px; }
.status > svg { margin-right: 25px; }
.status > span:nth-child(2) { margin-right: 27px; }
.modes { display: flex; margin-left: auto; height: 32px; }
.modes svg { width: 60px; height: 32px; }
.modes .on { background: #c6c6c6; }
.status .slider { margin: 0 16px 0 7px; }
.status .pct { margin-right: 37px; }

/* taskbar */
.taskbar { position: relative; display: flex; height: 72px; border-top: 2px solid #b5b9ab; background: linear-gradient(90deg, #dcf5cf 0, #d8f6d5 140px, #d2f5e0 260px, #cff5e6 420px, #d3f0dc 480px, #efdfc4 515px, #f0dacb 560px, #eddacb 650px, #dfe4d1 700px, #efe6c4 800px, #efe0c8 870px, #efdbcf 960px, #e9dacd 1020px, #d5dfdb 1110px, #dce0d6 1240px, #e2dcdf 1380px, #ecd8d1 1430px, #e3d9c6 1500px, #c8efde 1545px, #c3f2ee 1650px, #caecd9 1770px, #c5eae3 1920px); }
.weather { position: relative; width: 276.700px; padding: 11px 0 0 14px; }
.weather b { position: absolute; left: 31px; top: 8px; width: 24px; height: 24px; border-radius: 50%; background: #c42b1c; color: #fff; font: 17px/24px "Open Sans", sans-serif; text-align: center; }
.apps { display: flex; }
.apps > div { position: relative; display: flex; justify-content: center; width: 66.130px; padding-top: 16px; }
.apps svg { width: 36px; height: 36px; position: relative; }
.cur::before { content: ""; position: absolute; left: 5px; top: 4px; width: 56px; height: 58px; border-radius: 5px; background: #faf0e8; border: 1px solid #ead9cc; }
.cur::after, .run::after { content: ""; position: absolute; bottom: 7px; left: 28.500px; width: 9px; height: 5px; border-radius: 3px; background: #7d7a75; }
.cur::after { left: 21px; width: 24px; background: #0078d4; }
.tray { display: flex; flex: 1; align-items: center; padding: 0 0 1px 33px; color: #111; }
.up { margin-top: -1px; }
.lang, .clock { display: flex; flex-direction: column; line-height: 23.500px; align-items: center; }
.lang { width: 35px; margin-left: 30px; }
.net { margin: 0 0 0 28px; }
.clock { width: 92px; margin-left: 23px; align-items: flex-end; }
.bell { margin-left: 13px; }
```
FILE: script.js
```js
// Vertical ruler: one number per centimetre with a bar halfway between.
const ticks = document.getElementById('ticks');
for (let n = 3; n <= 30; n++) {
  const num = document.createElement('div');
  num.className = 'tick' + (n < 10 || n === 28 ? ' dots' : '');
  num.textContent = n === 28 || n === 3 ? '' : n;
  const bar = document.createElement('div');
  bar.className = 'tick bar';
  ticks.append(num, bar);
}
ticks.lastChild.remove();

// Tracks each label so that it fills its nominal width in any installed font.
for (const el of document.querySelectorAll('[data-w]')) {
  const target = Number(el.dataset.w);
  el.style.width = 'max-content';
  const count = el.textContent.length;
  let spacing = 0;
  for (let pass = 0; pass < 4; pass++) {
    spacing += (target - el.getBoundingClientRect().width) / count;
    el.style.letterSpacing = spacing + 'px';
  }
  el.style.width = '';
}
```
